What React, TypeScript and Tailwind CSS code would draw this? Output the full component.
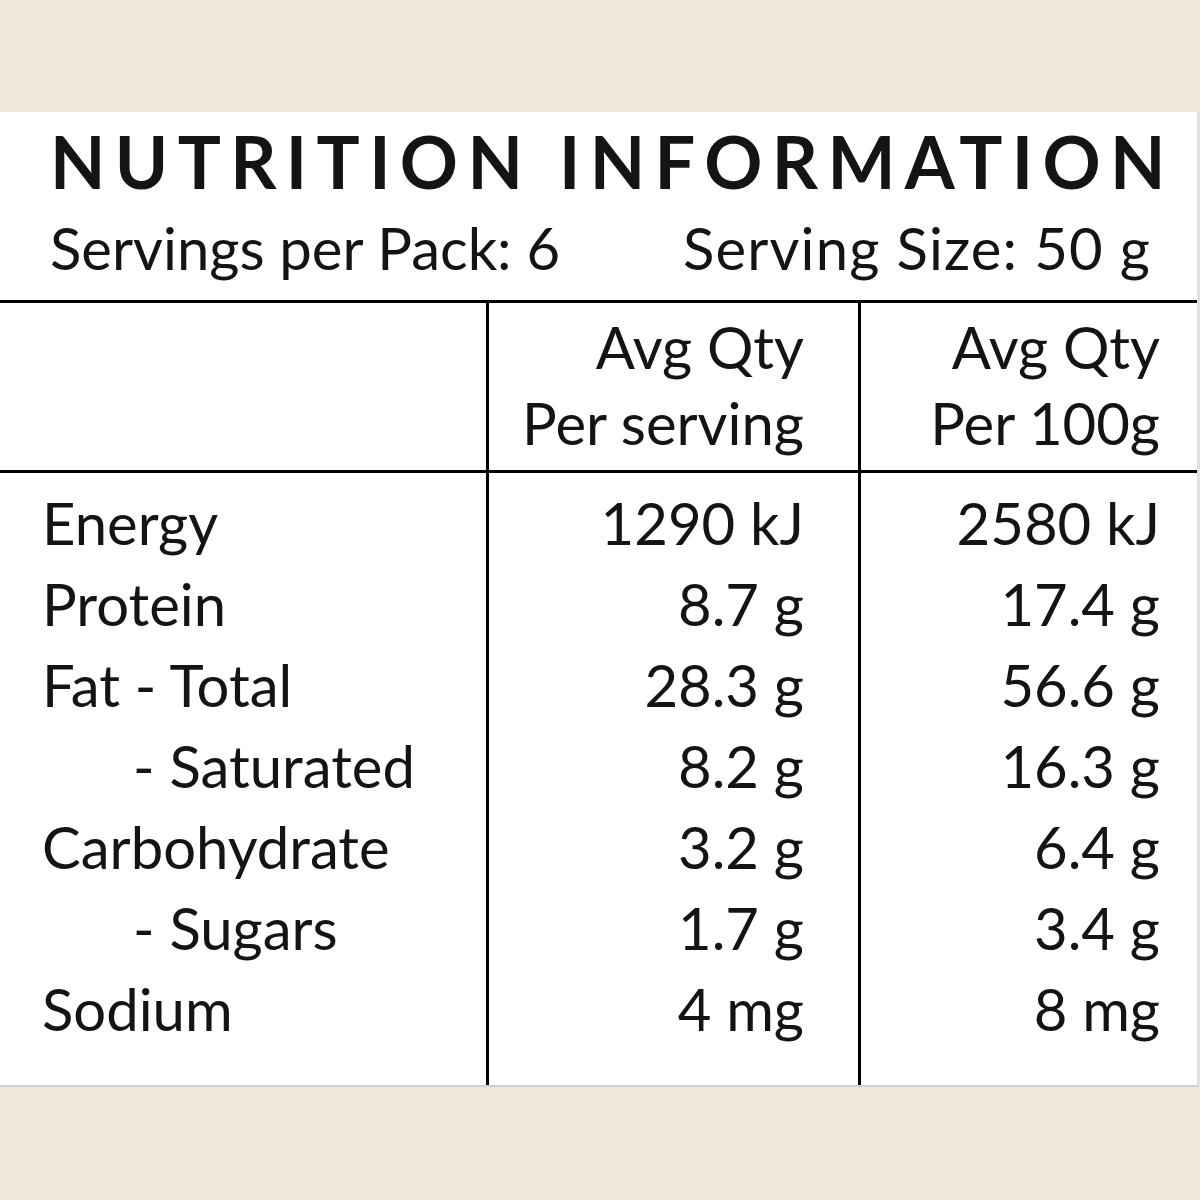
import React from "react";

const rows: { label: string; indent?: boolean; a: string; b: string }[] = [
  { label: "Energy", a: "1290 kJ", b: "2580 kJ" },
  { label: "Protein", a: "8.7 g", b: "17.4 g" },
  { label: "Fat - Total", a: "28.3 g", b: "56.6 g" },
  { label: "- Saturated", indent: true, a: "8.2 g", b: "16.3 g" },
  { label: "Carbohydrate", a: "3.2 g", b: "6.4 g" },
  { label: "- Sugars", indent: true, a: "1.7 g", b: "3.4 g" },
  { label: "Sodium", a: "4 mg", b: "8 mg" },
];

export default function App() {
  return (
    <div
      className="w-[1200px] h-[1200px] bg-[#f0e8dc] pt-[112px] text-[#141414]"
      style={{ fontFamily: "Lato, 'Noto Sans', sans-serif" }}
    >
      <div className="bg-white h-[975px] border-r-[3px] border-r-[#e2e2e2] border-b-[2px] border-b-[#cfcfcf] flex flex-col">
        <div className="h-[188px] flex flex-col">
          <div className="pl-[50px] pt-[9px] text-[72px] leading-[80px] font-bold tracking-[0.13em] whitespace-nowrap">
            NUTRITION INFORMATION
          </div>
          <div className="mt-[12px] flex text-[58px] leading-[70px] whitespace-nowrap">
            <div className="pl-[50px] w-[683px]">Servings per Pack: 6</div>
            <div className="tracking-[0.02em]">Serving Size: 50 g</div>
          </div>
        </div>
        <div className="border-t-[3px] border-black grid grid-cols-[486px_372px_1fr] flex-1">
          <div className="flex flex-col">
            <div className="h-[170px] border-b-[3px] border-black"></div>
            <div className="pt-[9px] text-[58px] leading-[81px]">
              {rows.map((r) => (
                <div key={r.label} className={r.indent ? "pl-[133px]" : "pl-[42px]"}>
                  {r.label}
                </div>
              ))}
            </div>
          </div>
          <div className="flex flex-col border-l-[3px] border-black">
            <div className="h-[170px] border-b-[3px] border-black text-right pr-[54px] pt-[6px] text-[58px] leading-[76px]">
              <div>Avg Qty</div>
              <div>Per serving</div>
            </div>
            <div className="pt-[9px] text-[58px] leading-[81px] text-right pr-[54px]">
              {rows.map((r) => (
                <div key={r.label}>{r.a}</div>
              ))}
            </div>
          </div>
          <div className="flex flex-col border-l-[3px] border-black">
            <div className="h-[170px] border-b-[3px] border-black text-right pr-[37px] pt-[6px] text-[58px] leading-[76px]">
              <div>Avg Qty</div>
              <div>Per 100g</div>
            </div>
            <div className="pt-[9px] text-[58px] leading-[81px] text-right pr-[37px]">
              {rows.map((r) => (
                <div key={r.label}>{r.b}</div>
              ))}
            </div>
          </div>
        </div>
      </div>
    </div>
  );
}
